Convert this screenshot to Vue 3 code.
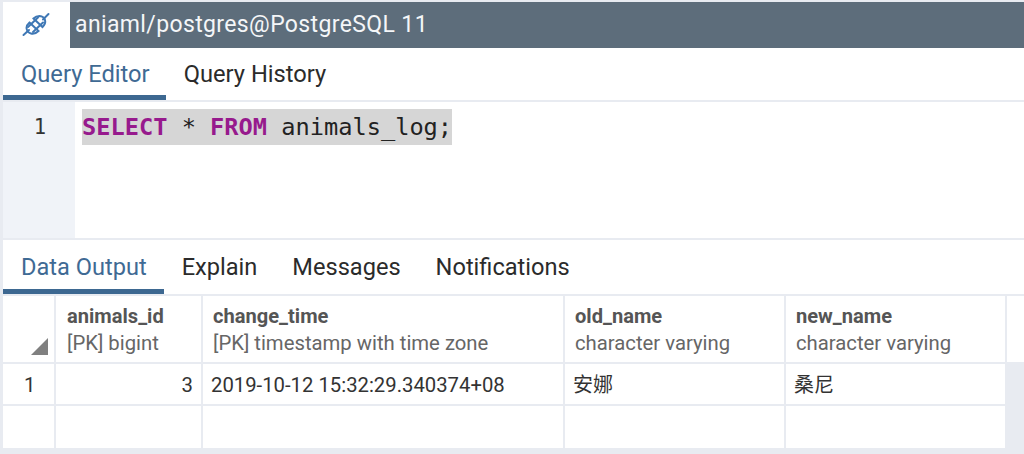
<template>
  <div class="panel">
    <div class="title-row">
      <div class="conn-icon">
        <svg width="30" height="30" viewBox="0 0 30 30" fill="none" stroke="#3f78b5" stroke-width="2" stroke-linecap="round">
          <line x1="2.5" y1="25" x2="8" y2="20" />
          <line x1="22" y1="9.5" x2="27.5" y2="4" />
          <path d="M8.5 12.5 L17.5 21 Q14 24.5 10 23.5 Q6 22.5 5.5 18 Q5.5 15 8.5 12.5 Z" />
          <path d="M12.5 8.5 L21.5 17 Q25 13.5 24 10 Q23 6.5 18.5 6 Q15 6 12.5 8.5 Z" />
          <line x1="7" y1="17" x2="17" y2="7.5" />
          <line x1="12" y1="22" x2="22" y2="12.5" />
        </svg>
      </div>
      <div class="title-bar">aniaml/postgres@PostgreSQL 11</div>
    </div>

    <div class="tabs top-tabs">
      <div
        v-for="(tab, i) in editorTabs"
        :key="tab"
        class="tab"
        :class="{ active: i === 0 }"
      >{{ tab }}</div>
    </div>

    <div class="editor">
      <div class="gutter">1</div>
      <div class="code-area">
        <div class="code-line"><span class="kw">SELECT</span> * <span class="kw">FROM</span> animals_log;</div>
      </div>
    </div>

    <div class="tabs bottom-tabs">
      <div
        v-for="(tab, i) in outputTabs"
        :key="tab"
        class="tab"
        :class="{ active: i === 0 }"
      >{{ tab }}</div>
    </div>

    <div class="grid">
      <div class="cell head corner"><span class="sort-mark"></span></div>
      <div v-for="col in columns" :key="col.name" class="cell head">
        <div class="col-name">{{ col.name }}</div>
        <div class="col-type">{{ col.type }}</div>
      </div>
      <div class="cell head filler"></div>

      <div class="cell row-no">1</div>
      <div class="cell num">3</div>
      <div class="cell">2019-10-12 15:32:29.340374+08</div>
      <div class="cell cjk">安娜</div>
      <div class="cell cjk">桑尼</div>
      <div class="cell empty"></div>

      <div class="cell row-no"></div>
      <div class="cell"></div>
      <div class="cell"></div>
      <div class="cell"></div>
      <div class="cell"></div>
      <div class="cell empty"></div>
    </div>
  </div>
</template>

<script setup>
const editorTabs = ['Query Editor', 'Query History']
const outputTabs = ['Data Output', 'Explain', 'Messages', 'Notifications']

const columns = [
  { name: 'animals_id', type: '[PK] bigint' },
  { name: 'change_time', type: '[PK] timestamp with time zone' },
  { name: 'old_name', type: 'character varying' },
  { name: 'new_name', type: 'character varying' },
]
</script>

<style>
html,
body {
  margin: 0;
  background: #e8ebf1;
}
</style>

<style scoped>
.panel {
  width: 1024px;
  height: 454px;
  overflow: hidden;
  box-sizing: border-box;
  padding: 2px 0 0 3px;
  background: #e8ebf1;
  font-family: Roboto, "Noto Sans CJK SC", sans-serif;
}
.title-row {
  display: flex;
  height: 46px;
  background: #fff;
}
.conn-icon {
  width: 67px;
  display: flex;
  align-items: center;
  justify-content: center;
  padding-right: 2px;
  box-sizing: border-box;
}
.title-bar {
  flex: 1;
  background: #5d6d7b;
  color: #f4f6f8;
  font-size: 23px;
  letter-spacing: 0.37px;
  line-height: 46px;
  padding-left: 5px;
}
.tabs {
  display: flex;
  background: #fff;
  color: #2b2b2b;
}
.top-tabs {
  height: 52px;
  font-size: 23.7px;
  border-bottom: 2px solid #e8ebf1;
}
.top-tabs .tab {
  padding: 13px 16px 0 18px;
}
.bottom-tabs {
  height: 54px;
  font-size: 23.6px;
  border-top: 2px solid #e8ebf1;
  border-bottom: 2px solid #e8ebf1;
}
.bottom-tabs .tab {
  padding: 14px 17px 0 18px;
}
.tab {
  box-sizing: border-box;
  border-bottom: 5px solid transparent;
  line-height: 27px;
}
.tab.active {
  color: #3f6a94;
  border-bottom-color: #3d6891;
}
.editor {
  display: flex;
  height: 136px;
  background: #fff;
}
.gutter {
  width: 72px;
  box-sizing: border-box;
  background: #f0f3f8;
  text-align: right;
  padding: 11px 29px 0 0;
  font-family: "DejaVu Sans Mono", monospace;
  font-size: 20.5px;
  line-height: 28px;
  color: #333;
}
.code-area {
  flex: 1;
  padding: 7px 0 0 7px;
}
.code-line {
  display: inline-block;
  background: #d6d6d6;
  height: 36px;
  line-height: 37px;
  font-family: "DejaVu Sans Mono", monospace;
  font-size: 23.65px;
  color: #222;
  white-space: pre;
}
.kw {
  color: #971a8d;
  font-weight: 700;
}
.grid {
  display: grid;
  grid-template-columns: 51px 145px 360px 219px 219px 1fr;
  grid-template-rows: 66px 40px 42px;
  column-gap: 2px;
  row-gap: 2px;
  font-size: 20.3px;
  color: #333;
}
.cell {
  background: #fff;
  box-sizing: border-box;
  padding: 0 8px;
  line-height: 42px;
  white-space: nowrap;
  overflow: hidden;
}
.cell.empty {
  background: transparent;
}
.cjk {
  font-size: 20px;
}
.row-no {
  padding: 0 0 0 21px;
}
.num {
  text-align: right;
}
.head {
  padding: 7px 10px 0 10px;
  line-height: 27px;
  color: #5f5f5f;
}
.col-name {
  font-size: 20.1px;
  font-weight: 700;
  color: #555;
}
.col-type {
  color: #666;
}
.head:nth-child(2) {
  padding-left: 11px;
}
.corner {
  position: relative;
}
.sort-mark {
  position: absolute;
  right: 6px;
  bottom: 7px;
  width: 0;
  height: 0;
  border-left: 17px solid transparent;
  border-bottom: 17px solid #808080;
}
</style>
